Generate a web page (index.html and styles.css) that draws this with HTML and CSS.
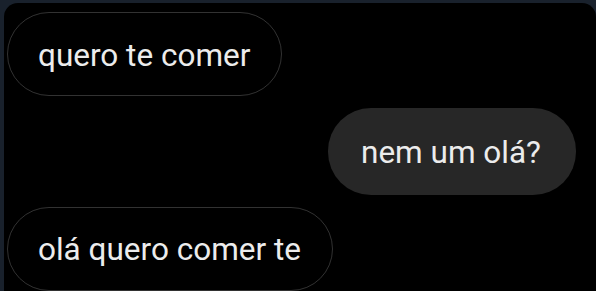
FILE: index.html
```html
<!DOCTYPE html>
<html lang="pt">
<head>
  <meta charset="UTF-8" />
  <meta name="viewport" content="width=device-width, initial-scale=1.0"/>
  <title>Chat</title>
  <link rel="stylesheet" href="styles.css">
</head>
<body>
  <!-- Chat panel -->
  <div class="chat">
    <div class="bubble received">quero te comer</div>
    <div class="bubble sent">nem um olá?</div>
    <div class="bubble received">olá quero comer te</div>
  </div>
</body>
</html>
```

FILE: styles.css
```css
:root {
  --frame: #19212c;
  --panel: #000;
  --text: #ececec;
  --outline: #323232;
  --sent-bg: #272727;
}

html, body {
  height: 100%;
}

body {
  margin: 0;
  background-color: var(--frame);
  font-family: Roboto, "Noto Sans", sans-serif;
  overflow: hidden;
}

.chat {
  margin: 3px 0 0 4px;
  height: calc(100% - 3px);
  background-color: var(--panel);
  border-radius: 14px 14px 0 0;
  padding: 9px 20px 0 3px;
  box-sizing: border-box;
  display: flex;
  flex-direction: column;
  gap: 12px;
}

.bubble {
  box-sizing: border-box;
  height: 85px;
  padding: 2px 31px 0 30px;
  border-radius: 43px;
  display: flex;
  align-items: center;
  color: var(--text);
  font-size: 31.5px;
  white-space: nowrap;
}

.received {
  align-self: flex-start;
  border: 1px solid var(--outline);
}

.sent {
  align-self: flex-end;
  height: 87px;
  padding: 2px 35px 0 33px;
  background-color: var(--sent-bg);
}
```
